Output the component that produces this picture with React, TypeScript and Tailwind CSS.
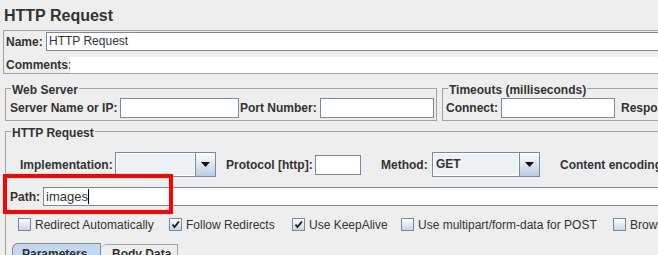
import type { ReactNode } from 'react'

function Field({ className, children }: { className: string; children?: ReactNode }) {
  return (
    <div className={`border border-[#7a8a99] bg-white pl-[2px] leading-[17px] ${className}`}>
      {children}
    </div>
  )
}

function Combo({ className, value }: { className: string; value?: string }) {
  return (
    <div className={`flex h-[25px] border border-[#7a8a99] bg-[#eef1f4] ${className}`}>
      <div className="flex-1 pl-[3px] leading-[23px] font-bold shadow-[inset_0_0_0_1px_#ffffff]">
        {value}
      </div>
      <div className="flex w-[20px] items-center justify-center border-l border-[#7a8a99] bg-linear-to-b from-white to-[#b9cde1]">
        <svg width="9" height="6" viewBox="0 0 9 6">
          <path d="M0 0 H9 L4.5 5 Z" fill="#111" />
        </svg>
      </div>
    </div>
  )
}

function Check({ className, label, checked }: { className: string; label: string; checked?: boolean }) {
  return (
    <div className={`flex items-center gap-[4px] ${className}`}>
      <div className="flex h-[13px] w-[13px] items-center justify-center border border-[#7a8a99] bg-linear-to-b from-white to-[#c6d5e5]">
        {checked && (
          <svg width="9" height="9" viewBox="0 0 9 9">
            <path d="M1.5 4.5 L3.5 7 L8 1.5" stroke="#1a1a1a" strokeWidth="1.8" fill="none" />
          </svg>
        )}
      </div>
      <span className="whitespace-nowrap leading-[14px]">{label}</span>
    </div>
  )
}

export default function App() {
  return (
    <div className="relative h-[255px] w-[658px] overflow-hidden bg-[#eeeeee] font-['Liberation_Sans',Arial,sans-serif] text-[12px] text-[#333333]">
      <div className="w-[900px]">
        <div className="h-[30px] pt-[6px] pl-[4px] text-[16px] leading-[20px] font-bold">HTTP Request</div>

        <div className="ml-[3px] border border-[#a3a3a3]">
          <div className="flex items-center pt-[1px]">
            <span className="w-[42px] pl-[2px] font-bold">Name:</span>
            <Field className="h-[19px] flex-1">HTTP Request</Field>
          </div>
          <div className="mt-[6px] flex items-center">
            <span className="w-[66px] pl-[2px] leading-[16px] font-bold">Comments:</span>
            <div className="h-[16px] flex-1 bg-white" />
          </div>
        </div>

        <div className="mt-[6px] flex items-start">
          <fieldset className="ml-[5px] w-[432px] border border-[#a3a3a3]">
            <legend className="ml-[5px] px-[1px] pt-[3px] leading-[14px] font-bold">Web Server</legend>
            <div className="mt-[1px] mb-[2px] flex items-center">
              <span className="w-[114px] pl-[4px] font-bold whitespace-nowrap">Server Name or IP:</span>
              <Field className="h-[20px] w-[119px]" />
              <span className="w-[81px] pl-[1px] font-bold whitespace-nowrap">Port Number:</span>
              <Field className="h-[20px] w-[114px]" />
            </div>
          </fieldset>
          <fieldset className="ml-[5px] w-[300px] border border-[#a3a3a3]">
            <legend className="ml-[5px] px-[1px] pt-[3px] leading-[14px] font-bold">Timeouts (milliseconds)</legend>
            <div className="mt-[1px] mb-[2px] flex items-center">
              <span className="w-[58px] pl-[3px] font-bold">Connect:</span>
              <Field className="h-[20px] w-[114px]" />
              <span className="pl-[6px] font-bold whitespace-nowrap">Response:</span>
              <Field className="ml-[4px] h-[20px] w-[114px]" />
            </div>
          </fieldset>
        </div>

        <fieldset className="mt-[2px] ml-[5px] border border-[#a3a3a3] pb-[20px]">
          <legend className="ml-[5px] px-[1px] pt-[3px] leading-[14px] font-bold">HTTP Request</legend>

          <div className="mt-[12px] flex items-center">
            <span className="w-[109px] pl-[14px] font-bold">Implementation:</span>
            <Combo className="w-[101px]" />
            <span className="w-[99px] pl-[10px] font-bold whitespace-nowrap">Protocol [http]:</span>
            <Field className="h-[20px] w-[46px]" />
            <span className="w-[71px] pl-[20px] font-bold">Method:</span>
            <Combo className="w-[108px]" value="GET" />
            <span className="pl-[20px] font-bold whitespace-nowrap">Content encoding:</span>
            <Field className="ml-[4px] h-[20px] w-[100px]" />
          </div>

          <div className="mt-[10px] flex items-center">
            <span className="w-[37px] pl-[4px] font-bold">Path:</span>
            <Field className="flex h-[19px] flex-1 items-center">
              <span className="text-[13px]">images</span>
              <span className="inline-block h-[15px] w-[1px] bg-black" />
            </Field>
          </div>

          <div className="mt-[12px] ml-[12px] flex h-[13px] items-center">
            <Check className="w-[151px]" label="Redirect Automatically" />
            <Check className="w-[123px]" label="Follow Redirects" checked />
            <Check className="w-[109px]" label="Use KeepAlive" checked />
            <Check className="w-[212px]" label="Use multipart/form-data for POST" />
            <Check className="w-[200px]" label="Browser-compatible headers" />
          </div>

          <div className="mt-[12px] ml-[6px] flex items-end">
            <div className="h-[20px] w-[89px] rounded-tl-[6px] border border-b-0 border-[#7a8a99] bg-[#c4d8ed] pt-[3px] pl-[9px] leading-[14px] font-bold">
              Parameters
            </div>
            <div className="h-[19px] w-[77px] rounded-tl-[6px] border border-b-0 border-l-0 border-[#a3a3a3] bg-[#eeeeee] pt-[2px] pl-[11px] leading-[14px] font-bold">
              Body Data
            </div>
          </div>
        </fieldset>
      </div>

      <div className="absolute top-[174px] left-[3px] h-[40px] w-[170px] border-[4px] border-[#ff0000]" />
    </div>
  )
}
